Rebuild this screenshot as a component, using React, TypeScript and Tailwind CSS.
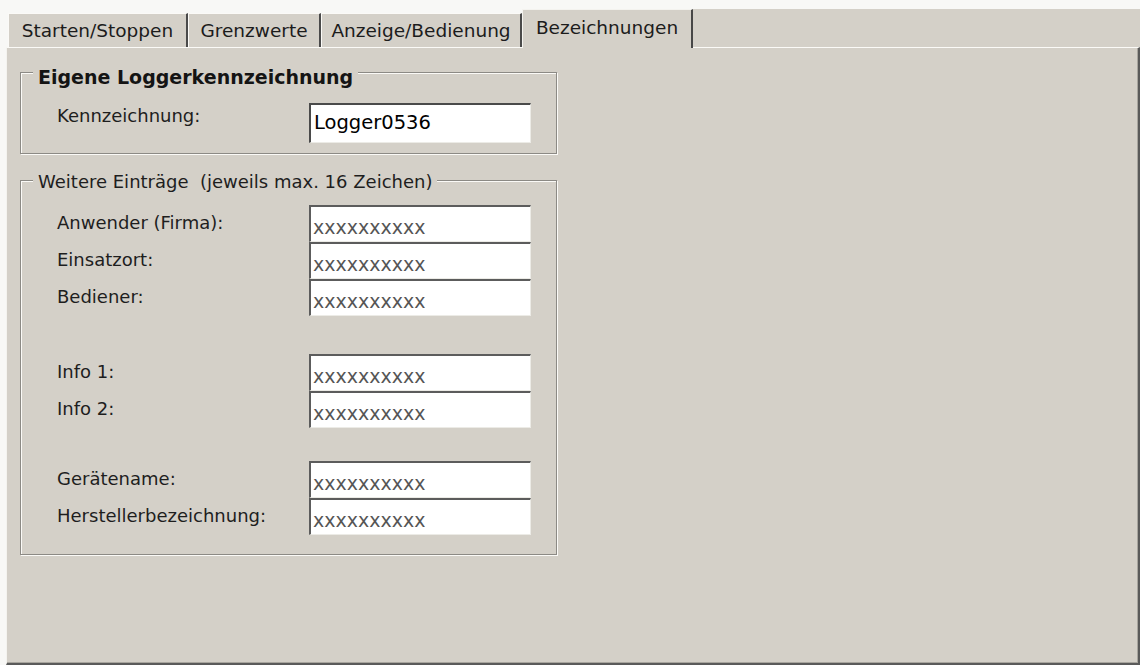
import React from "react";

const FONT = { fontFamily: '"DejaVu Sans", Verdana, sans-serif' };

function Tab({ label, width, active }: { label: string; width: string; active?: boolean }) {
  if (active) {
    return (
      <div
        className={`${width} h-[39px] -mb-px relative z-10 bg-[#d4d0c8] border-t border-l border-t-[#f4f3ef] border-l-[#f4f3ef] border-r-2 border-r-[#474747] flex justify-center pt-[7px] text-[18.5px] leading-[22px] text-[#1c1c1c]`}
      >
        {label}
      </div>
    );
  }
  return (
    <div
      className={`${width} h-[34px] bg-[#d4d0c8] border-t border-l border-t-[#fbfaf7] border-l-[#fbfaf7] border-r-2 border-r-[#4a4a4a] flex justify-center pt-[6px] text-[18.5px] leading-[22px] text-[#1c1c1c]`}
    >
      {label}
    </div>
  );
}

function Field({ value, dim }: { value: string; dim?: boolean }) {
  return (
    <div
      className={`w-[222px] h-[37px] bg-white border-t-2 border-l-2 border-t-[#5c5c5c] border-l-[#5c5c5c] border-r border-b border-r-[#ecebe6] border-b-[#ecebe6] pl-[2px] pt-[9px] text-[19px] leading-[22px] ${
        dim ? "text-[#555555]" : "text-black"
      }`}
    >
      {value}
    </div>
  );
}

function Row({ label, value }: { label: string; value: string }) {
  return (
    <div className="flex h-[37px]">
      <div className="w-[288px] pl-[36px] pt-[7px] text-[18px] leading-[22px] text-[#1e1e1e]">{label}</div>
      <Field value={value} dim />
    </div>
  );
}

export default function App() {
  const X = "xxxxxxxxxx";
  return (
    <div className="w-[1140px] h-[665px] bg-[#f8f8f6] flex flex-col overflow-hidden" style={FONT}>
      {/* Tab strip */}
      <div className="mt-[9px] h-[38px] flex items-end pl-[8px] shrink-0">
        <Tab label="Starten/Stoppen" width="w-[180px]" />
        <Tab label="Grenzwerte" width="w-[133px]" />
        <Tab label="Anzeige/Bedienung" width="w-[201px]" />
        <Tab label="Bezeichnungen" width="w-[171px]" active />
        <div className="flex-1 h-[38px] bg-[#d4d0c8]" />
      </div>

      {/* Panel */}
      <div className="flex-1 ml-[6px] bg-[#d4d0c8] border-t border-l border-t-[#fbfaf7] border-l-[#f4f3ef] border-r-2 border-b-2 border-r-[#5a5a5a] border-b-[#5a5a5a] shadow-[inset_-1px_-1px_0_#a8a59e] pl-[13px] pt-[24px]">
        {/* Group 1 */}
        <div className="relative w-[537px] h-[82px] border border-[#8c8a85] shadow-[inset_1px_1px_0_#fbfaf7,1px_1px_0_#fbfaf7] pt-[30px]">
          <div className="absolute -top-[7px] left-[12px] px-[5px] bg-[#d4d0c8] text-[19px] leading-[22px] font-bold text-[#141414]">
            Eigene Loggerkennzeichnung
          </div>
          <div className="flex h-[40px]">
            <div className="w-[288px] pl-[36px] pt-[2px] text-[18px] leading-[22px] text-[#1e1e1e]">Kennzeichnung:</div>
            <div className="w-[222px] h-[40px] bg-white border-t-2 border-l-2 border-t-[#4a4a4a] border-l-[#4a4a4a] border-r border-b border-r-[#ecebe6] border-b-[#ecebe6] pl-[3px] pt-[7px] text-[19.5px] leading-[22px] text-black">
              Logger0536
            </div>
          </div>
        </div>

        {/* Group 2 */}
        <div className="relative mt-[26px] w-[537px] h-[375px] border border-[#8c8a85] shadow-[inset_1px_1px_0_#fbfaf7,1px_1px_0_#fbfaf7] pt-[24px]">
          <div className="absolute -top-[10px] left-[12px] px-[5px] bg-[#d4d0c8] text-[18px] leading-[22px] text-[#1e1e1e] whitespace-pre">
            {"Weitere Einträge  (jeweils max. 16 Zeichen)"}
          </div>
          <div className="flex flex-col">
            <Row label="Anwender (Firma):" value={X} />
            <Row label="Einsatzort:" value={X} />
            <Row label="Bediener:" value={X} />
          </div>
          <div className="flex flex-col mt-[38px]">
            <Row label="Info 1:" value={X} />
            <Row label="Info 2:" value={X} />
          </div>
          <div className="flex flex-col mt-[33px]">
            <Row label="Gerätename:" value={X} />
            <Row label="Herstellerbezeichnung:" value={X} />
          </div>
        </div>
      </div>
    </div>
  );
}
